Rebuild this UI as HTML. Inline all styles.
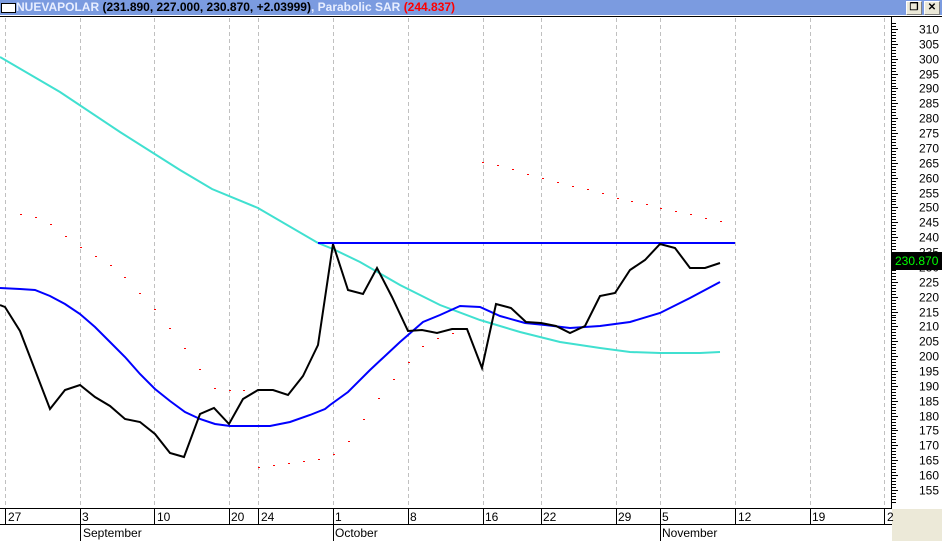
<!DOCTYPE html>
<html><head><meta charset="utf-8"><style>
html,body{margin:0;padding:0;background:#fff;}
body{width:942px;height:541px;position:relative;overflow:hidden;font-family:"Liberation Sans",sans-serif;}
#title{position:absolute;left:0;top:0;width:942px;height:15px;background:#7b9be0;font-family:"Liberation Sans",sans-serif;font-size:12px;font-weight:bold;line-height:15px;white-space:nowrap;}
#title .box{position:absolute;left:1px;top:3px;width:13px;height:8px;border:1px solid #000;background:#fff;}
#title .t{position:absolute;left:16px;top:0;}
.btn{position:absolute;top:1px;width:14px;height:12px;background:#ece9d8;border:1px solid #fff;border-right-color:#808080;border-bottom-color:#808080;font-size:10px;line-height:12px;text-align:center;color:#000;}
svg{position:absolute;left:0;top:0;}
</style></head><body>
<div id="title"><div class="box"></div><div class="t"><span style="color:#e8eeff">NUEVAPOLAR</span> <span style="color:#000">(231.890, 227.000, 230.870, +2.03999)</span><span style="color:#e8eeff">, Parabolic SAR </span><span style="color:#ff0000">(244.837)</span></div>
<div class="btn" style="left:906px">&#x2750;</div><div class="btn" style="left:924px;font-weight:bold">✕</div></div>
<svg width="942" height="541" viewBox="0 0 942 541" style="top:0">
<line x1="0" y1="16.5" x2="942" y2="16.5" stroke="#000" stroke-width="1"/>
<g stroke="#c0c0c0" stroke-dasharray="4,3" stroke-width="1">
<line x1="5.5" y1="18" x2="5.5" y2="508"/><line x1="80.5" y1="18" x2="80.5" y2="508"/><line x1="154.5" y1="18" x2="154.5" y2="508"/><line x1="229.5" y1="18" x2="229.5" y2="508"/><line x1="258.5" y1="18" x2="258.5" y2="508"/><line x1="333.5" y1="18" x2="333.5" y2="508"/><line x1="408.5" y1="18" x2="408.5" y2="508"/><line x1="483.5" y1="18" x2="483.5" y2="508"/><line x1="541.5" y1="18" x2="541.5" y2="508"/><line x1="616.5" y1="18" x2="616.5" y2="508"/><line x1="660.5" y1="18" x2="660.5" y2="508"/><line x1="735.5" y1="18" x2="735.5" y2="508"/><line x1="810.5" y1="18" x2="810.5" y2="508"/><line x1="884.5" y1="18" x2="884.5" y2="508"/>
</g>
<g fill="#ff0000">
<rect x="20" y="214" width="2" height="1"/><rect x="35" y="217" width="2" height="1"/><rect x="50" y="224" width="2" height="1"/><rect x="65" y="236" width="2" height="1"/><rect x="80" y="247" width="2" height="1"/><rect x="95" y="256" width="2" height="1"/><rect x="110" y="265" width="2" height="1"/><rect x="124" y="277" width="2" height="1"/><rect x="139" y="293" width="2" height="1"/><rect x="154" y="309" width="2" height="1"/><rect x="169" y="328" width="2" height="1"/><rect x="184" y="348" width="2" height="1"/><rect x="199" y="369" width="2" height="1"/><rect x="214" y="388" width="2" height="1"/><rect x="229" y="390" width="2" height="1"/><rect x="243" y="390" width="2" height="1"/>
<rect x="258" y="467" width="2" height="1"/><rect x="273" y="465" width="2" height="1"/><rect x="288" y="463" width="2" height="1"/><rect x="303" y="461" width="2" height="1"/><rect x="318" y="459" width="2" height="1"/><rect x="333" y="454" width="2" height="1"/>
<rect x="348" y="441" width="2" height="1"/><rect x="363" y="419" width="2" height="1"/><rect x="378" y="398" width="2" height="1"/><rect x="393" y="379" width="2" height="1"/><rect x="408" y="362" width="2" height="1"/><rect x="422" y="346" width="2" height="1"/><rect x="437" y="338" width="2" height="1"/><rect x="452" y="333" width="2" height="1"/><rect x="468" y="333" width="2" height="1"/>
<rect x="482" y="162" width="2" height="1"/><rect x="497" y="165" width="2" height="1"/><rect x="512" y="169" width="2" height="1"/><rect x="527" y="174" width="2" height="1"/><rect x="542" y="178" width="2" height="1"/><rect x="557" y="182" width="2" height="1"/><rect x="572" y="186" width="2" height="1"/><rect x="587" y="189" width="2" height="1"/><rect x="602" y="193" width="2" height="1"/><rect x="617" y="198" width="2" height="1"/><rect x="631" y="201" width="2" height="1"/><rect x="646" y="204" width="2" height="1"/><rect x="660" y="208" width="2" height="1"/><rect x="675" y="211" width="2" height="1"/><rect x="690" y="214" width="2" height="1"/><rect x="705" y="218" width="2" height="1"/><rect x="720" y="221" width="2" height="1"/>
</g>
<polyline fill="none" stroke="#40e0d0" stroke-width="2" points="0,57 60,92 120,132 180,170 212,189 258,208 318,243 333,249 360,262 400,285 440,305 480,320 520,332 560,342 600,348 630,352 660,353 700,353 720,352"/>
<polyline fill="none" stroke="#0000ff" stroke-width="2" points="0,288 20,289 35,290 50,296 65,304 80,314 95,327 110,342 125,357 140,374 155,389 170,401 185,412 200,419 215,424 230,426 250,426 270,426 290,422 310,415 325,409 330,405 348,392 370,370 400,342 423,322 440,315 460,306 480,307 500,316 525,323 545,325 570,328 600,326 630,322 660,313 690,298 720,282"/>
<line x1="318" y1="243" x2="735" y2="243" stroke="#0000ff" stroke-width="2"/>
<polyline fill="none" stroke="#000" stroke-width="2" points="0,305 5,307 20,331 50,409 65,390 80,385 95,397 110,406 125,419 140,422 155,434 170,453 184,457 200,414 214,408 229,424 243,399 258,390 273,390 288,395 303,376 318,345 333,244 348,290 363,294 377,268 392,297 408,331 422,330 437,333 452,329 467,329 482,368 496,304 511,308 526,322 541,323 556,326 570,333 585,326 600,296 615,293 630,270 645,260 660,244 675,248 690,268 705,268 720,263"/>
<line x1="891.5" y1="17" x2="891.5" y2="509" stroke="#000"/>
<g stroke="#000" id="ticks"></g>
<g font-family="Liberation Sans,sans-serif" font-size="12" text-anchor="end" fill="#000" id="lbl"></g>
<rect x="892" y="252" width="50" height="18" fill="#000"/>
<text x="895" y="265" font-family="Liberation Sans,sans-serif" font-size="12" fill="#00ff00">230.870</text>
<rect x="892" y="509" width="50" height="32" fill="#ece9d8"/>
<line x1="0" y1="508.5" x2="892" y2="508.5" stroke="#000"/>
<line x1="0" y1="524.5" x2="892" y2="524.5" stroke="#000"/>
<g stroke="#000">
<line x1="5.5" y1="508" x2="5.5" y2="524"/><line x1="80.5" y1="508" x2="80.5" y2="541"/><line x1="154.5" y1="508" x2="154.5" y2="524"/><line x1="229.5" y1="508" x2="229.5" y2="524"/><line x1="258.5" y1="508" x2="258.5" y2="524"/><line x1="333.5" y1="508" x2="333.5" y2="541"/><line x1="408.5" y1="508" x2="408.5" y2="524"/><line x1="483.5" y1="508" x2="483.5" y2="524"/><line x1="541.5" y1="508" x2="541.5" y2="524"/><line x1="616.5" y1="508" x2="616.5" y2="524"/><line x1="660.5" y1="508" x2="660.5" y2="541"/><line x1="735.5" y1="508" x2="735.5" y2="524"/><line x1="810.5" y1="508" x2="810.5" y2="524"/><line x1="884.5" y1="508" x2="884.5" y2="524"/>
</g>
<g font-family="Liberation Sans,sans-serif" font-size="12" fill="#000">
<text x="8" y="521">27</text><text x="82" y="521">3</text><text x="157" y="521">10</text><text x="231" y="521">20</text><text x="261" y="521">24</text><text x="335" y="521">1</text><text x="410" y="521">8</text><text x="485" y="521">16</text><text x="543" y="521">22</text><text x="618" y="521">29</text><text x="662" y="521">5</text><text x="738" y="521">12</text><text x="812" y="521">19</text><text x="887" y="521">2</text>
<text x="83" y="537">September</text><text x="335" y="537">October</text><text x="662" y="537">November</text>
</g>
</svg>
<script>
var t=document.getElementById('ticks'),l=document.getElementById('lbl'),ns='http://www.w3.org/2000/svg';
for(var v=312;v>=151;v--){var y=Math.round(29+(310-v)*2.974)+0.5;if(y<18||y>508)continue;
var ln=document.createElementNS(ns,'line');ln.setAttribute('x1',892);ln.setAttribute('x2',v%5==0?898:896);ln.setAttribute('y1',y);ln.setAttribute('y2',y);t.appendChild(ln);
if(v%5==0){var tx=document.createElementNS(ns,'text');tx.setAttribute('x',939);tx.setAttribute('y',y+4);tx.textContent=v;l.appendChild(tx);}}
</script>
</body></html>
